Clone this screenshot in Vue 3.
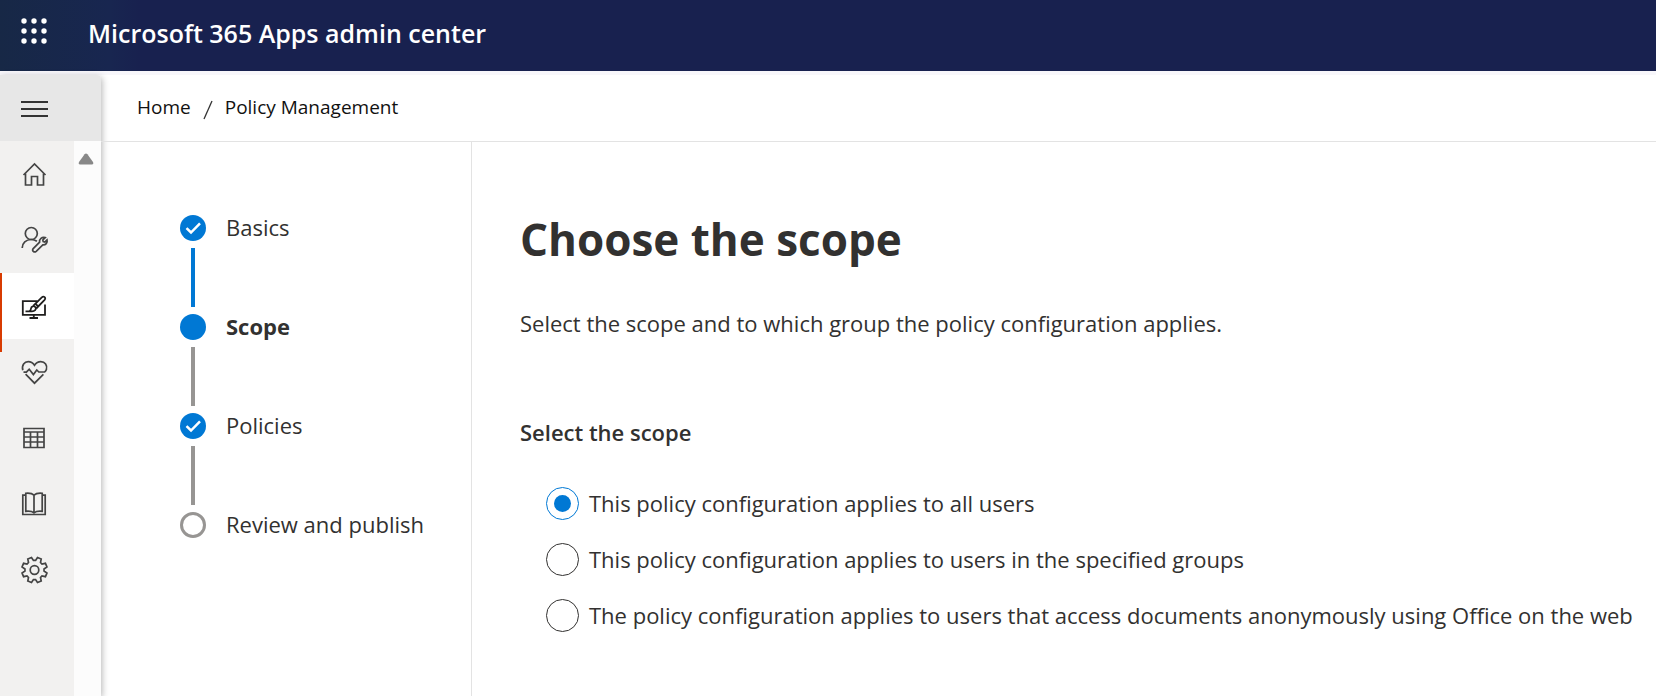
<script setup>
import { ref } from 'vue'

const steps = [
  { label: 'Basics', state: 'done', bar: 'blue' },
  { label: 'Scope', state: 'current', bar: 'gray' },
  { label: 'Policies', state: 'done', bar: 'gray' },
  { label: 'Review and publish', state: 'todo', bar: '' },
]

const options = [
  { value: 'all', label: 'This policy configuration applies to all users' },
  { value: 'groups', label: 'This policy configuration applies to users in the specified groups' },
  { value: 'anonymous', label: 'The policy configuration applies to users that access documents anonymously using Office on the web' },
]
const scope = ref('all')

function gearPath(cx, cy, outer, inner, teeth) {
  const points = []
  const pitch = (Math.PI * 2) / teeth
  for (let i = 0; i < teeth; i++) {
    const mid = (i + 0.5) * pitch
    for (const [offset, r] of [[-0.36, inner], [-0.2, outer], [0.2, outer], [0.36, inner]]) {
      const a = mid + offset * pitch
      points.push(`${(cx + r * Math.sin(a)).toFixed(2)} ${(cy - r * Math.cos(a)).toFixed(2)}`)
    }
  }
  return `M${points.join('L')}Z`
}

const nav = [
  { label: 'Home', paths: ['M3.5 15L14.5 4L25.5 15', 'M5.5 13.5V25H11.5V16.5H17.5V25H23.5V13.5'] },
  {
    label: 'Roles',
    paths: [
      'M17.3 7.5a6 6 0 1 1-12 0a6 6 0 0 1 12 0Z',
      'M2.2 22C2.2 17 6 13.5 11.3 13.5c2.2 0 4 .6 5.6 1.7',
      'M25.2 11.6L22.8 14L23.2 15.6L24.8 16L27 13.8C27.8 16.8 25.6 19.2 22.8 18.9L16.2 25.3C14.2 27 11.4 24.6 13.2 22.6L19.6 16.2C19 13.2 22 10.6 25.2 11.6Z',
    ],
  },
  {
    label: 'Customization',
    active: true,
    paths: [
      'M17.5 9.2H2.8V22.8H25V12.5',
      'M13.8 23V26M9.5 26H18',
      'M5.5 19.3H11.5C14.8 19.5 16.6 17.5 15.6 15.4C14.2 13.4 11.2 14 11 16.5C10.9 18 10.4 19 9.2 19.3',
      'M13.2 13.8L21.8 5.3C23.8 3.5 26.4 5.8 24.6 7.8L16.2 16.5',
      'M15.5 11.8L18.3 14.5',
    ],
  },
  {
    label: 'Health',
    paths: [
      'M2.8 12.3C1.4 6.8 4.6 3.6 8.2 3.6C11 3.6 13 5 14.5 7.2C16 5 18 3.6 20.8 3.6C25 3.6 27.6 7.6 26.4 11.4C26 12.6 25.3 13.5 24.5 14H18.8L16.8 12L13.4 16.6L9.2 11.2L6.4 14.2H3.5',
      'M5.6 16.2L14.5 25.2L23.4 16.4',
    ],
  },
  {
    label: 'Inventory',
    paths: ['M4 4.5H24V23.5H4Z', 'M4 8H24M4 13H24M4 18H24', 'M10.5 8V23.5M17.5 8V23.5'],
  },
  {
    label: 'Learn',
    paths: [
      'M5.8 5.2H2.8V24.5H25.2V5.2H22.2',
      'M14 5.2C12 3.2 9 3 5.8 3.3V21.3C9 21 12 21.2 14 22.8C16 21.2 19 21 22.2 21.3V3.3C19 3 16 3.2 14 5.2V22.8',
    ],
  },
  {
    label: 'Settings',
    paths: [gearPath(14.5, 14, 12.8, 9.6, 8), 'M18.8 14a4.3 4.3 0 1 1-8.6 0a4.3 4.3 0 0 1 8.6 0Z'],
  },
]
</script>

<template>
  <div class="app">
    <header class="topbar">
      <button class="waffle" type="button" aria-label="App launcher">
        <svg width="28" height="28" viewBox="0 0 28 28" fill="#fff">
          <template v-for="y in [4, 14, 24]" :key="y">
            <circle v-for="x in [4, 14, 24]" :key="x" :cx="x" :cy="y" r="2.7" />
          </template>
        </svg>
      </button>
      <span class="brand">Microsoft 365 Apps admin center</span>
    </header>

    <div class="body">
      <aside class="side">
        <button class="menu" type="button" aria-label="Toggle navigation">
          <svg width="28" height="28" viewBox="0 0 28 28" fill="#333">
            <rect x="1" y="7" width="27" height="2" />
            <rect x="1" y="14" width="27" height="2" />
            <rect x="1" y="21" width="27" height="2" />
          </svg>
        </button>
        <div class="side-body">
          <nav class="nav">
            <a v-for="item in nav" :key="item.label" href="#" class="nav-item" :class="{ active: item.active }" :aria-label="item.label">
              <svg width="29" height="28" viewBox="0 0 29 28">
                <path v-for="d in item.paths" :key="d" :d="d" />
              </svg>
            </a>
          </nav>
          <div class="scroll">
            <svg width="16" height="12" viewBox="0 0 16 12" fill="#888">
              <path d="M6.6 1.2Q8 -.2 9.4 1.2L15 9Q15.8 11.3 13.8 11.5H2.2Q.2 11.3 1 9Z" />
            </svg>
          </div>
        </div>
      </aside>

      <div class="content">
        <nav class="crumbs" aria-label="Breadcrumb">
          <a href="#">Home</a>
          <svg class="slash" width="10" height="20" viewBox="0 0 10 20"><path d="M1 19L9 1" /></svg>
          <a href="#">Policy Management</a>
        </nav>
        <div class="panes">
          <ol class="steps">
            <li v-for="step in steps" :key="step.label" class="step" :class="step.state">
              <div class="track">
                <span class="dot">
                  <svg v-if="step.state === 'done'" width="26" height="26" viewBox="0 0 26 26">
                    <path d="M6.5 13.2L11 17.5L20 8.3" />
                  </svg>
                </span>
                <span v-if="step.bar" class="bar" :class="step.bar"></span>
              </div>
              <span class="step-label">{{ step.label }}</span>
            </li>
          </ol>

          <main class="main">
            <h1>Choose the scope</h1>
            <p>Select the scope and to which group the policy configuration applies.</p>
            <fieldset>
              <legend>Select the scope</legend>
              <label v-for="o in options" :key="o.value" class="option">
                <input v-model="scope" type="radio" name="scope" :value="o.value" />
                <span>{{ o.label }}</span>
              </label>
            </fieldset>
          </main>
        </div>
      </div>
    </div>
  </div>
</template>

<style>
body {
  margin: 0;
  background: #fff;
}
</style>

<style scoped>
.app {
  display: flex;
  flex-direction: column;
  min-height: 100vh;
  font-family: 'Segoe UI', 'Open Sans', 'Noto Sans', sans-serif;
  font-size: 22px;
  color: #323130;
}
button {
  border: 0;
  padding: 0;
  background: none;
  cursor: pointer;
}
svg {
  display: block;
}
a {
  color: inherit;
  text-decoration: none;
}
.topbar {
  display: flex;
  align-items: center;
  gap: 40px;
  height: 71px;
  padding-left: 20px;
  background: linear-gradient(90deg, #172846 0, #182650 110px, #18214f 140px);
  border-bottom: 4px solid #f8f7fb;
}
.waffle {
  padding-bottom: 10px;
}
.brand {
  padding-bottom: 6px;
  font-size: 25px;
  font-weight: 600;
  line-height: 32px;
  color: #fff;
}
.body {
  display: flex;
  flex: 1;
}
.side {
  display: flex;
  flex-direction: column;
  flex: none;
  width: 101px;
  border-top-right-radius: 4px;
  box-shadow: 1px 2px 7px rgba(0, 0, 0, 0.3);
  background: #fcfcfc;
}
.menu {
  height: 66px;
  padding-left: 20px;
  border-top-right-radius: 4px;
  background: #e7e7e7;
}
.side-body {
  display: flex;
  flex: 1;
}
.nav {
  width: 74px;
  background: #f2f1f0;
}
.nav-item {
  display: flex;
  align-items: center;
  height: 66px;
  padding-left: 20px;
  position: relative;
}
.nav-item path {
  fill: none;
  stroke: #444;
  stroke-width: 1.7;
}
.nav-item.active {
  background: #fff;
}
.nav-item.active path {
  stroke: #201f1e;
  stroke-width: 1.8;
}
.nav-item.active::before {
  content: '';
  position: absolute;
  left: 0;
  top: 0;
  width: 2px;
  height: 79px;
  background: #d83b01;
}
.scroll {
  padding: 12px 0 0 4px;
}
.content {
  flex: 1;
  display: flex;
  flex-direction: column;
  min-width: 0;
}
.crumbs {
  display: flex;
  align-items: center;
  gap: 12px;
  box-sizing: border-box;
  height: 67px;
  padding: 0 0 2px 36px;
  border-bottom: 1px solid #e3e3e3;
  font-size: 19px;
  color: #111;
}
.slash {
  margin-top: 6px;
  fill: none;
  stroke: #333;
  stroke-width: 1.3;
}
.panes {
  display: flex;
  flex: 1;
}
.steps {
  flex: none;
  width: 291px;
  margin: 0;
  padding: 73px 0 0 79px;
  border-right: 1px solid #e3e3e3;
  list-style: none;
}
.step {
  display: flex;
  gap: 20px;
}
.track {
  display: flex;
  flex-direction: column;
  align-items: center;
  gap: 7px;
  padding-bottom: 7px;
}
.dot {
  box-sizing: border-box;
  width: 26px;
  height: 26px;
  border-radius: 50%;
  background: #0078d4;
}
.dot path {
  fill: none;
  stroke: #fff;
  stroke-width: 2.5;
}
.todo .dot {
  border: 3px solid #979593;
  background: #fff;
}
.bar {
  width: 4px;
  height: 59px;
  background: #979593;
}
.bar.blue {
  background: #0078d4;
}
.step-label {
  line-height: 24px;
}
.current .step-label {
  font-weight: 700;
}
.main {
  flex: 1;
  min-width: 0;
  padding: 67px 16px 0 48px;
}
h1 {
  margin: 0;
  font-size: 44px;
  font-weight: 700;
  line-height: 60px;
}
p {
  margin: 38px 0 0;
  line-height: 32px;
}
fieldset {
  min-width: 0;
  margin: 77px 0 0;
  padding: 0;
  border: 0;
}
legend {
  margin-bottom: 27px;
  padding: 0;
  font-weight: 600;
  line-height: 32px;
}
.option {
  display: flex;
  align-items: center;
  gap: 10px;
  height: 56px;
  padding-left: 26px;
}
.option input {
  appearance: none;
  box-sizing: border-box;
  flex: none;
  display: grid;
  place-items: center;
  width: 33px;
  height: 33px;
  margin: 0;
  border: 1px solid #323130;
  border-radius: 50%;
}
.option input:checked {
  border-color: #0078d4;
}
.option input:checked::before {
  content: '';
  width: 17px;
  height: 17px;
  border-radius: 50%;
  background: #0078d4;
}
</style>
